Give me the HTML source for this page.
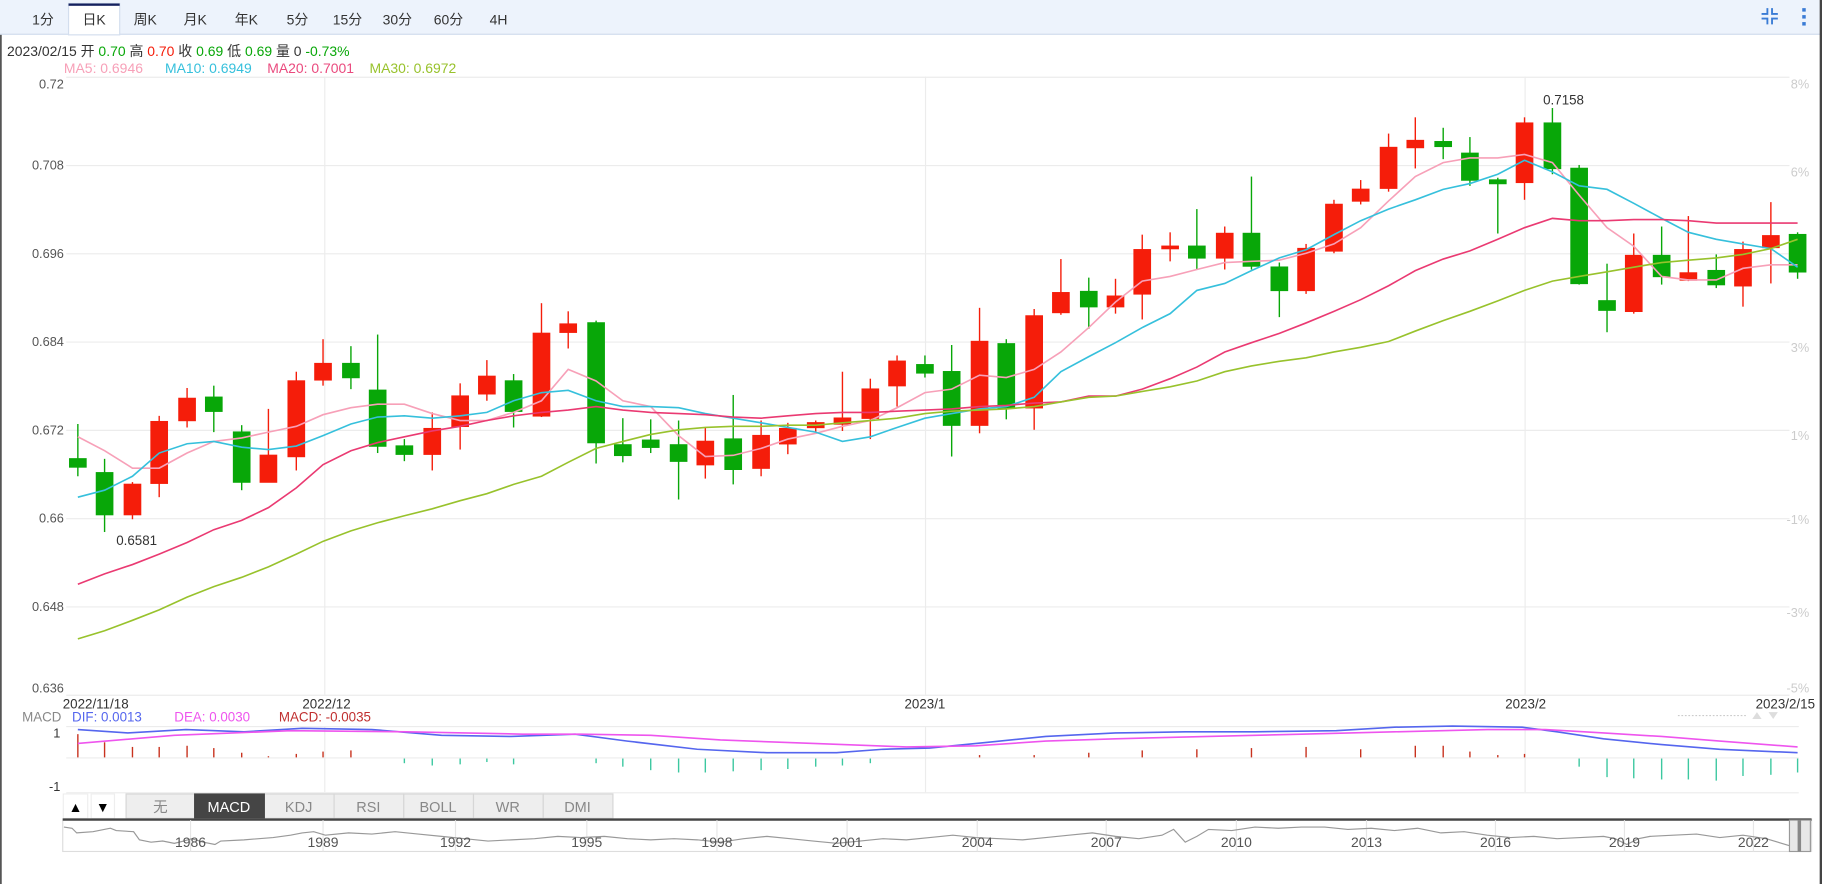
<!DOCTYPE html>
<html><head><meta charset="utf-8"><style>
html,body{margin:0;padding:0;background:#fff;}
svg{display:block;font-family:"Liberation Sans","Noto Sans CJK SC",sans-serif;}
</style></head><body>
<svg width="1822" height="884" viewBox="0 0 1568 761" preserveAspectRatio="none" xmlns="http://www.w3.org/2000/svg">
<rect x="0" y="0" width="1568" height="761" fill="#fff"/>
<!-- tab bar -->
<rect x="0" y="0" width="1568" height="30" fill="#edf3fc"/>
<line x1="0" y1="29.5" x2="1568" y2="29.5" stroke="#d3deee"/>
<rect x="59" y="3" width="44" height="27" fill="#fff" stroke="#d3deee"/>
<rect x="59" y="3" width="44" height="2" fill="#14205e"/>
<g font-size="12" fill="#333" text-anchor="middle">
<text x="37" y="21">1分</text><text x="81" y="21">日K</text><text x="125" y="21">周K</text><text x="168" y="21">月K</text><text x="212" y="21">年K</text><text x="256" y="21">5分</text><text x="299" y="21">15分</text><text x="342" y="21">30分</text><text x="386" y="21">60分</text><text x="429" y="21">4H</text>
</g>
<g stroke="#3a7bd5" stroke-width="1.6" fill="none">
<path d="M1521 7v5h-5M1525 7v5h5M1521 21v-5h-5M1525 21v-5h5"/>
</g>
<g fill="#3a7bd5"><rect x="1551" y="7" width="3" height="3"/><rect x="1551" y="13" width="3" height="3"/><rect x="1551" y="19" width="3" height="3"/></g>
<!-- info -->
<text x="6" y="48" font-size="12" fill="#333">2023/02/15 开 <tspan fill="#08a708">0.70</tspan> 高 <tspan fill="#f51d0a">0.70</tspan> 收 <tspan fill="#08a708">0.69</tspan> 低 <tspan fill="#08a708">0.69</tspan> 量 0 <tspan fill="#08a708">-0.73%</tspan></text>
<g font-size="12"><text x="55" y="63" fill="#f7a0b8">MA5: 0.6946</text><text x="142" y="63" fill="#36c0dc">MA10: 0.6949</text><text x="230" y="63" fill="#ea4a7e">MA20: 0.7001</text><text x="318" y="63" fill="#98c22c">MA30: 0.6972</text></g>
<!-- grid -->
<g stroke="#ececec" stroke-width="1">
<line x1="57" y1="66.5" x2="1540" y2="66.5"/><line x1="57" y1="142.5" x2="1540" y2="142.5"/><line x1="57" y1="218.5" x2="1540" y2="218.5"/><line x1="57" y1="294.5" x2="1540" y2="294.5"/><line x1="57" y1="370.5" x2="1540" y2="370.5"/><line x1="57" y1="446.5" x2="1540" y2="446.5"/><line x1="57" y1="522.5" x2="1540" y2="522.5"/><line x1="57" y1="598.5" x2="1540" y2="598.5"/>
<line x1="279.5" y1="66" x2="279.5" y2="598"/><line x1="796.5" y1="66" x2="796.5" y2="598"/><line x1="1312.5" y1="66" x2="1312.5" y2="598"/>
<line x1="57" y1="625.5" x2="1548" y2="625.5"/><line x1="57" y1="652.5" x2="1548" y2="652.5"/><line x1="57" y1="682.5" x2="1548" y2="682.5"/>
<line x1="279.5" y1="625" x2="279.5" y2="682"/><line x1="796.5" y1="625" x2="796.5" y2="682"/><line x1="1312.5" y1="625" x2="1312.5" y2="682"/>
</g>
<g font-size="11" fill="#555" text-anchor="end">
<text x="55" y="76">0.72</text><text x="55" y="146">0.708</text><text x="55" y="222">0.696</text><text x="55" y="298">0.684</text><text x="55" y="374">0.672</text><text x="55" y="450">0.66</text><text x="55" y="526">0.648</text><text x="55" y="596">0.636</text>
</g>
<g font-size="11" fill="#ccc" text-anchor="end">
<text x="1557" y="76">8%</text><text x="1557" y="152">6%</text><text x="1557" y="303">3%</text><text x="1557" y="379">1%</text><text x="1557" y="451">-1%</text><text x="1557" y="531">-3%</text><text x="1557" y="596">-5%</text>
</g>
<!-- candles -->
<g stroke-width="1.2">
<g stroke="#08a708" fill="#08a708">
<line x1="67" y1="365" x2="67" y2="410"/><rect x="60" y="395" width="14" height="7"/>
<line x1="90" y1="395" x2="90" y2="458"/><rect x="83" y="407" width="14" height="36"/>
<line x1="184" y1="332" x2="184" y2="372"/><rect x="177" y="342" width="14" height="12"/>
<line x1="208" y1="366" x2="208" y2="422"/><rect x="201" y="372" width="14" height="43"/>
<line x1="302" y1="298" x2="302" y2="335"/><rect x="295" y="313" width="14" height="12"/>
<line x1="325" y1="288" x2="325" y2="390"/><rect x="318" y="336" width="14" height="48"/>
<line x1="348" y1="378" x2="348" y2="397"/><rect x="341" y="384" width="14" height="7"/>
<line x1="442" y1="322" x2="442" y2="368"/><rect x="435" y="328" width="14" height="26"/>
<line x1="513" y1="276" x2="513" y2="399"/><rect x="506" y="278" width="14" height="103"/>
<line x1="536" y1="360" x2="536" y2="398"/><rect x="529" y="383" width="14" height="9"/>
<line x1="560" y1="361" x2="560" y2="390"/><rect x="553" y="379" width="14" height="6"/>
<line x1="584" y1="362" x2="584" y2="430"/><rect x="577" y="383" width="14" height="14"/>
<line x1="631" y1="340" x2="631" y2="417"/><rect x="624" y="378" width="14" height="26"/>
<line x1="796" y1="306" x2="796" y2="325"/><rect x="789" y="314" width="14" height="7"/>
<line x1="819" y1="297" x2="819" y2="393"/><rect x="812" y="320" width="14" height="46"/>
<line x1="866" y1="292" x2="866" y2="361"/><rect x="859" y="296" width="14" height="55"/>
<line x1="937" y1="239" x2="937" y2="283"/><rect x="930" y="251" width="14" height="13"/>
<line x1="1030" y1="180" x2="1030" y2="232"/><rect x="1023" y="212" width="14" height="10"/>
<line x1="1077" y1="152" x2="1077" y2="232"/><rect x="1070" y="201" width="14" height="28"/>
<line x1="1101" y1="226" x2="1101" y2="273"/><rect x="1094" y="230" width="14" height="20"/>
<line x1="1242" y1="110" x2="1242" y2="137"/><rect x="1235" y="122" width="14" height="4"/>
<line x1="1265" y1="118" x2="1265" y2="160"/><rect x="1258" y="132" width="14" height="23"/>
<line x1="1289" y1="153" x2="1289" y2="201"/><rect x="1282" y="155" width="14" height="3"/>
<line x1="1336" y1="93" x2="1336" y2="150"/><rect x="1329" y="106" width="14" height="39"/>
<line x1="1359" y1="142" x2="1359" y2="245"/><rect x="1352" y="145" width="14" height="99"/>
<line x1="1383" y1="227" x2="1383" y2="286"/><rect x="1376" y="259" width="14" height="8"/>
<line x1="1430" y1="195" x2="1430" y2="245"/><rect x="1423" y="220" width="14" height="18"/>
<line x1="1477" y1="219" x2="1477" y2="248"/><rect x="1470" y="233" width="14" height="12"/>
<line x1="1547" y1="200" x2="1547" y2="240"/><rect x="1540" y="202" width="14" height="32"/>
</g>
<g stroke="#f51d0a" fill="#f51d0a">
<line x1="114" y1="415" x2="114" y2="447"/><rect x="107" y="417" width="14" height="26"/>
<line x1="137" y1="358" x2="137" y2="428"/><rect x="130" y="363" width="14" height="53"/>
<line x1="161" y1="334" x2="161" y2="368"/><rect x="154" y="343" width="14" height="19"/>
<line x1="231" y1="352" x2="231" y2="415"/><rect x="224" y="392" width="14" height="23"/>
<line x1="255" y1="320" x2="255" y2="405"/><rect x="248" y="328" width="14" height="65"/>
<line x1="278" y1="292" x2="278" y2="332"/><rect x="271" y="313" width="14" height="14"/>
<line x1="372" y1="355" x2="372" y2="405"/><rect x="365" y="369" width="14" height="22"/>
<line x1="396" y1="330" x2="396" y2="387"/><rect x="389" y="341" width="14" height="26"/>
<line x1="419" y1="310" x2="419" y2="345"/><rect x="412" y="324" width="14" height="15"/>
<line x1="466" y1="261" x2="466" y2="359"/><rect x="459" y="287" width="14" height="71"/>
<line x1="489" y1="268" x2="489" y2="300"/><rect x="482" y="279" width="14" height="7"/>
<line x1="607" y1="368" x2="607" y2="412"/><rect x="600" y="380" width="14" height="20"/>
<line x1="655" y1="362" x2="655" y2="410"/><rect x="648" y="375" width="14" height="28"/>
<line x1="678" y1="364" x2="678" y2="391"/><rect x="671" y="369" width="14" height="13"/>
<line x1="702" y1="362" x2="702" y2="372"/><rect x="695" y="364" width="14" height="4"/>
<line x1="725" y1="320" x2="725" y2="371"/><rect x="718" y="360" width="14" height="5"/>
<line x1="749" y1="326" x2="749" y2="378"/><rect x="742" y="335" width="14" height="25"/>
<line x1="772" y1="306" x2="772" y2="350"/><rect x="765" y="311" width="14" height="21"/>
<line x1="843" y1="265" x2="843" y2="373"/><rect x="836" y="294" width="14" height="72"/>
<line x1="890" y1="266" x2="890" y2="370"/><rect x="883" y="272" width="14" height="79"/>
<line x1="913" y1="223" x2="913" y2="271"/><rect x="906" y="252" width="14" height="17"/>
<line x1="960" y1="240" x2="960" y2="270"/><rect x="953" y="255" width="14" height="9"/>
<line x1="983" y1="202" x2="983" y2="275"/><rect x="976" y="215" width="14" height="38"/>
<line x1="1007" y1="200" x2="1007" y2="225"/><rect x="1000" y="212" width="14" height="2"/>
<line x1="1054" y1="195" x2="1054" y2="232"/><rect x="1047" y="201" width="14" height="21"/>
<line x1="1124" y1="210" x2="1124" y2="253"/><rect x="1117" y="214" width="14" height="36"/>
<line x1="1148" y1="172" x2="1148" y2="218"/><rect x="1141" y="176" width="14" height="40"/>
<line x1="1171" y1="155" x2="1171" y2="176"/><rect x="1164" y="163" width="14" height="10"/>
<line x1="1195" y1="115" x2="1195" y2="165"/><rect x="1188" y="127" width="14" height="35"/>
<line x1="1218" y1="101" x2="1218" y2="145"/><rect x="1211" y="121" width="14" height="6"/>
<line x1="1312" y1="101" x2="1312" y2="172"/><rect x="1305" y="106" width="14" height="51"/>
<line x1="1406" y1="201" x2="1406" y2="270"/><rect x="1399" y="220" width="14" height="48"/>
<line x1="1453" y1="186" x2="1453" y2="242"/><rect x="1446" y="235" width="14" height="6"/>
<line x1="1500" y1="208" x2="1500" y2="264"/><rect x="1493" y="215" width="14" height="31"/>
<line x1="1524" y1="174" x2="1524" y2="244"/><rect x="1517" y="203" width="14" height="10"/>
</g>
</g>
<!-- MA lines -->
<g fill="none" stroke-width="1.4">
<polyline stroke="#f7a0b8" points="67,376 90,388 114,403 137,403 161,390 184,380 208,377 231,372 255,367 278,357 302,351 325,348 348,348 372,356 396,362 419,362 442,355 466,345 489,318 513,328 536,345 560,350 584,375 607,393 631,392 655,386 678,378 702,373 725,367 749,362 772,351 796,338 819,335 843,323 866,325 890,318 913,303 937,282 960,260 983,242 1007,238 1030,232 1054,226 1077,225 1101,224 1124,218 1148,210 1171,196 1195,173 1218,152 1242,140 1265,136 1289,136 1312,133 1336,140 1359,168 1383,196 1406,212 1430,238 1453,241 1477,241 1500,231 1524,228 1547,228"/>
<polyline stroke="#36c0dc" points="67,428 90,422 114,410 137,390 161,382 184,380 208,385 231,387 255,384 278,375 302,365 325,359 348,358 372,360 396,358 419,355 442,345 466,338 489,336 513,345 536,350 560,350 584,351 607,356 631,360 655,364 678,368 702,372 725,380 749,376 772,368 796,360 819,356 843,352 866,350 890,342 913,320 937,307 960,295 983,282 1007,270 1030,250 1054,244 1077,233 1101,222 1124,215 1148,202 1171,190 1195,180 1218,172 1242,163 1265,158 1289,150 1312,138 1336,148 1359,160 1383,163 1406,175 1430,188 1453,200 1477,206 1500,210 1524,214 1547,230"/>
<polyline stroke="#ea3a72" points="67,503 90,494 114,486 137,477 161,467 184,456 208,448 231,437 255,420 278,400 302,388 325,381 348,376 372,371 396,367 419,362 442,358 466,355 489,353 513,350 536,353 560,355 584,356 607,357 631,359 655,360 678,358 702,356 725,355 749,355 772,354 796,353 819,352 843,350 866,349 890,347 913,346 937,341 960,341 983,335 1007,326 1030,316 1054,303 1077,295 1101,287 1124,278 1148,268 1171,258 1195,246 1218,233 1242,223 1265,216 1289,206 1312,196 1336,188 1359,190 1383,190 1406,189 1430,189 1453,190 1477,192 1500,192 1524,192 1547,192"/>
<polyline stroke="#98c22c" points="67,550 90,543 114,534 137,525 161,514 184,505 208,497 231,488 255,477 278,466 302,457 325,450 348,444 372,438 396,431 419,425 442,417 466,410 489,398 513,386 536,380 560,374 584,370 607,368 631,367 655,367 678,366 702,366 725,364 749,362 772,360 796,356 819,354 843,353 866,352 890,350 913,346 937,342 960,341 983,337 1007,333 1030,328 1054,320 1077,315 1101,311 1124,308 1148,303 1171,299 1195,294 1218,285 1242,276 1265,268 1289,259 1312,250 1336,242 1359,238 1383,234 1406,230 1430,226 1453,224 1477,222 1500,219 1524,214 1547,206"/>
</g>
<text x="100" y="469" font-size="11.5" fill="#333">0.6581</text>
<text x="1328" y="90" font-size="11.5" fill="#333">0.7158</text>
<!-- date labels -->
<g font-size="11.5" fill="#333">
<text x="54" y="610">2022/11/18</text><text x="281" y="610" text-anchor="middle">2022/12</text><text x="796" y="610" text-anchor="middle">2023/1</text><text x="1313" y="610" text-anchor="middle">2023/2</text><text x="1562" y="610" text-anchor="end">2023/2/15</text>
</g>
<g font-size="11.5"><text x="19" y="621" fill="#888">MACD</text><text x="62" y="621" fill="#5566ee">DIF: 0.0013</text><text x="150" y="621" fill="#ee55ee">DEA: 0.0030</text><text x="240" y="621" fill="#c03030">MACD: -0.0035</text></g>
<line x1="1444" y1="616" x2="1504" y2="616" stroke="#ccc" stroke-dasharray="1.5,1.5"/>
<path d="M1508 619l4-6 4 6z M1522 613l4 6 4-6z" fill="#ddd"/>
<g font-size="11" fill="#333" text-anchor="end"><text x="52" y="635">1</text><text x="52" y="681">-1</text></g>
<!-- MACD histogram -->
<g stroke-width="1.2">
<g stroke="#c8321e">
<line x1="67" y1="652" x2="67" y2="632"/><line x1="90" y1="652" x2="90" y2="639"/><line x1="114" y1="652" x2="114" y2="643"/><line x1="137" y1="652" x2="137" y2="643"/><line x1="161" y1="652" x2="161" y2="642"/><line x1="184" y1="652" x2="184" y2="644"/><line x1="208" y1="652" x2="208" y2="648"/><line x1="231" y1="652" x2="231" y2="651"/><line x1="255" y1="652" x2="255" y2="649"/><line x1="278" y1="652" x2="278" y2="647"/><line x1="302" y1="652" x2="302" y2="646"/>
<line x1="843" y1="652" x2="843" y2="650"/><line x1="890" y1="652" x2="890" y2="650"/><line x1="937" y1="652" x2="937" y2="648"/><line x1="983" y1="652" x2="983" y2="646"/><line x1="1030" y1="652" x2="1030" y2="645"/><line x1="1077" y1="652" x2="1077" y2="644"/><line x1="1124" y1="652" x2="1124" y2="643"/><line x1="1171" y1="652" x2="1171" y2="645"/><line x1="1218" y1="652" x2="1218" y2="642"/><line x1="1242" y1="652" x2="1242" y2="642"/><line x1="1265" y1="652" x2="1265" y2="647"/><line x1="1289" y1="652" x2="1289" y2="650"/><line x1="1312" y1="652" x2="1312" y2="649"/>
</g>
<g stroke="#3cc8a0">
<line x1="348" y1="653" x2="348" y2="657"/><line x1="372" y1="653" x2="372" y2="659"/><line x1="396" y1="653" x2="396" y2="658"/><line x1="419" y1="653" x2="419" y2="656"/><line x1="442" y1="653" x2="442" y2="658"/><line x1="513" y1="653" x2="513" y2="657"/><line x1="536" y1="653" x2="536" y2="660"/><line x1="560" y1="653" x2="560" y2="663"/><line x1="584" y1="653" x2="584" y2="665"/><line x1="607" y1="653" x2="607" y2="665"/><line x1="631" y1="653" x2="631" y2="664"/><line x1="655" y1="653" x2="655" y2="663"/><line x1="678" y1="653" x2="678" y2="662"/><line x1="702" y1="653" x2="702" y2="660"/><line x1="725" y1="653" x2="725" y2="659"/><line x1="749" y1="653" x2="749" y2="657"/>
<line x1="1359" y1="653" x2="1359" y2="660"/><line x1="1383" y1="653" x2="1383" y2="669"/><line x1="1406" y1="653" x2="1406" y2="670"/><line x1="1430" y1="653" x2="1430" y2="671"/><line x1="1453" y1="653" x2="1453" y2="671"/><line x1="1477" y1="653" x2="1477" y2="672"/><line x1="1500" y1="653" x2="1500" y2="668"/><line x1="1524" y1="653" x2="1524" y2="667"/><line x1="1547" y1="653" x2="1547" y2="665"/>
</g>
</g>
<g fill="none" stroke-width="1.4">
<polyline stroke="#5566ee" points="67,628 110,631 160,628 210,630 260,627 320,628 380,633 440,634 495,632 540,638 600,645 660,648 720,648 760,645 800,644 850,639 900,634 960,631 1020,630 1080,630 1150,629 1200,626 1250,625 1310,626 1340,630 1380,636 1430,641 1480,645 1547,648"/>
<polyline stroke="#ee55ee" points="67,640 150,633 250,629 350,630 450,632 500,632 560,633 620,637 700,640 780,643 840,642 900,638 960,636 1040,634 1120,632 1200,630 1280,628 1330,628 1380,631 1430,634 1480,638 1547,643"/>
</g>
<!-- indicator buttons -->
<rect x="54.5" y="683.5" width="21" height="21" fill="#fff" stroke="#eee"/><rect x="78.5" y="683.5" width="20" height="21" fill="#fff" stroke="#eee"/>
<text x="65" y="699" font-size="12" text-anchor="middle" fill="#000">▲</text><text x="88.5" y="699" font-size="12" text-anchor="middle" fill="#000">▼</text>
<g stroke="#d6d6d6" fill="#eee">
<rect x="108.5" y="683.5" width="59" height="21"/><rect x="227.5" y="683.5" width="60" height="21"/><rect x="287.5" y="683.5" width="60" height="21"/><rect x="347.5" y="683.5" width="60" height="21"/><rect x="407.5" y="683.5" width="60" height="21"/><rect x="467.5" y="683.5" width="60" height="21"/>
</g>
<rect x="167.5" y="683.5" width="60" height="21" fill="#454545" stroke="#454545"/>
<g font-size="12.5" text-anchor="middle" fill="#888">
<text x="138" y="699">无</text><text x="197" y="699" fill="#fff">MACD</text><text x="257" y="699">KDJ</text><text x="317" y="699">RSI</text><text x="377" y="699">BOLL</text><text x="437" y="699">WR</text><text x="497" y="699">DMI</text>
</g>
<!-- navigator -->
<rect x="54" y="705" width="1505" height="28" fill="#fff" stroke="#ddd"/>
<line x1="54" y1="705.5" x2="1559" y2="705.5" stroke="#444" stroke-width="2"/>
<g stroke="#e6e6e6"><line x1="164" y1="706" x2="164" y2="733"/><line x1="278" y1="706" x2="278" y2="733"/><line x1="392" y1="706" x2="392" y2="733"/><line x1="505" y1="706" x2="505" y2="733"/><line x1="617" y1="706" x2="617" y2="733"/><line x1="729" y1="706" x2="729" y2="733"/><line x1="841" y1="706" x2="841" y2="733"/><line x1="952" y1="706" x2="952" y2="733"/><line x1="1064" y1="706" x2="1064" y2="733"/><line x1="1176" y1="706" x2="1176" y2="733"/><line x1="1287" y1="706" x2="1287" y2="733"/><line x1="1398" y1="706" x2="1398" y2="733"/><line x1="1509" y1="706" x2="1509" y2="733"/></g>
<polyline fill="none" stroke="#999" stroke-width="1" points="55,712 62,713 66,717 80,716 95,713 100,715 115,716 120,723 130,725 140,724 150,726 158,724 165,722 175,725 185,727 190,724 210,723 235,721 250,719 260,717 270,716 280,719 300,717 320,718 340,716 360,718 380,720 400,722 420,724 440,723 460,722 480,720 500,721 520,720 540,722 560,723 580,722 600,723 620,725 640,722 660,720 680,722 700,724 720,726 740,724 760,722 780,723 800,721 820,719 840,721 860,722 880,723 900,721 920,719 940,717 960,720 980,722 1000,719 1010,714 1020,725 1030,720 1040,714 1060,715 1080,712 1100,713 1120,712 1140,712 1160,714 1180,713 1200,715 1220,713 1240,717 1260,716 1280,719 1300,721 1320,720 1340,722 1360,721 1380,720 1390,722 1400,727 1410,722 1420,720 1440,719 1460,718 1480,721 1500,719 1520,722 1540,728"/>
<g font-size="12" fill="#555" text-anchor="middle">
<text x="164" y="729">1986</text><text x="278" y="729">1989</text><text x="392" y="729">1992</text><text x="505" y="729">1995</text><text x="617" y="729">1998</text><text x="729" y="729">2001</text><text x="841" y="729">2004</text><text x="952" y="729">2007</text><text x="1064" y="729">2010</text><text x="1176" y="729">2013</text><text x="1287" y="729">2016</text><text x="1398" y="729">2019</text><text x="1509" y="729">2022</text>
</g>
<rect x="1540" y="706" width="18" height="27" fill="#e8e8e8" stroke="#999"/>
<rect x="1547" y="706" width="3" height="27" fill="#888"/>
<!-- frame borders -->
<rect x="0" y="30" width="1.5" height="731" fill="#555"/>
<rect x="1566" y="0" width="2" height="761" fill="#444"/>
</svg>
</body></html>
